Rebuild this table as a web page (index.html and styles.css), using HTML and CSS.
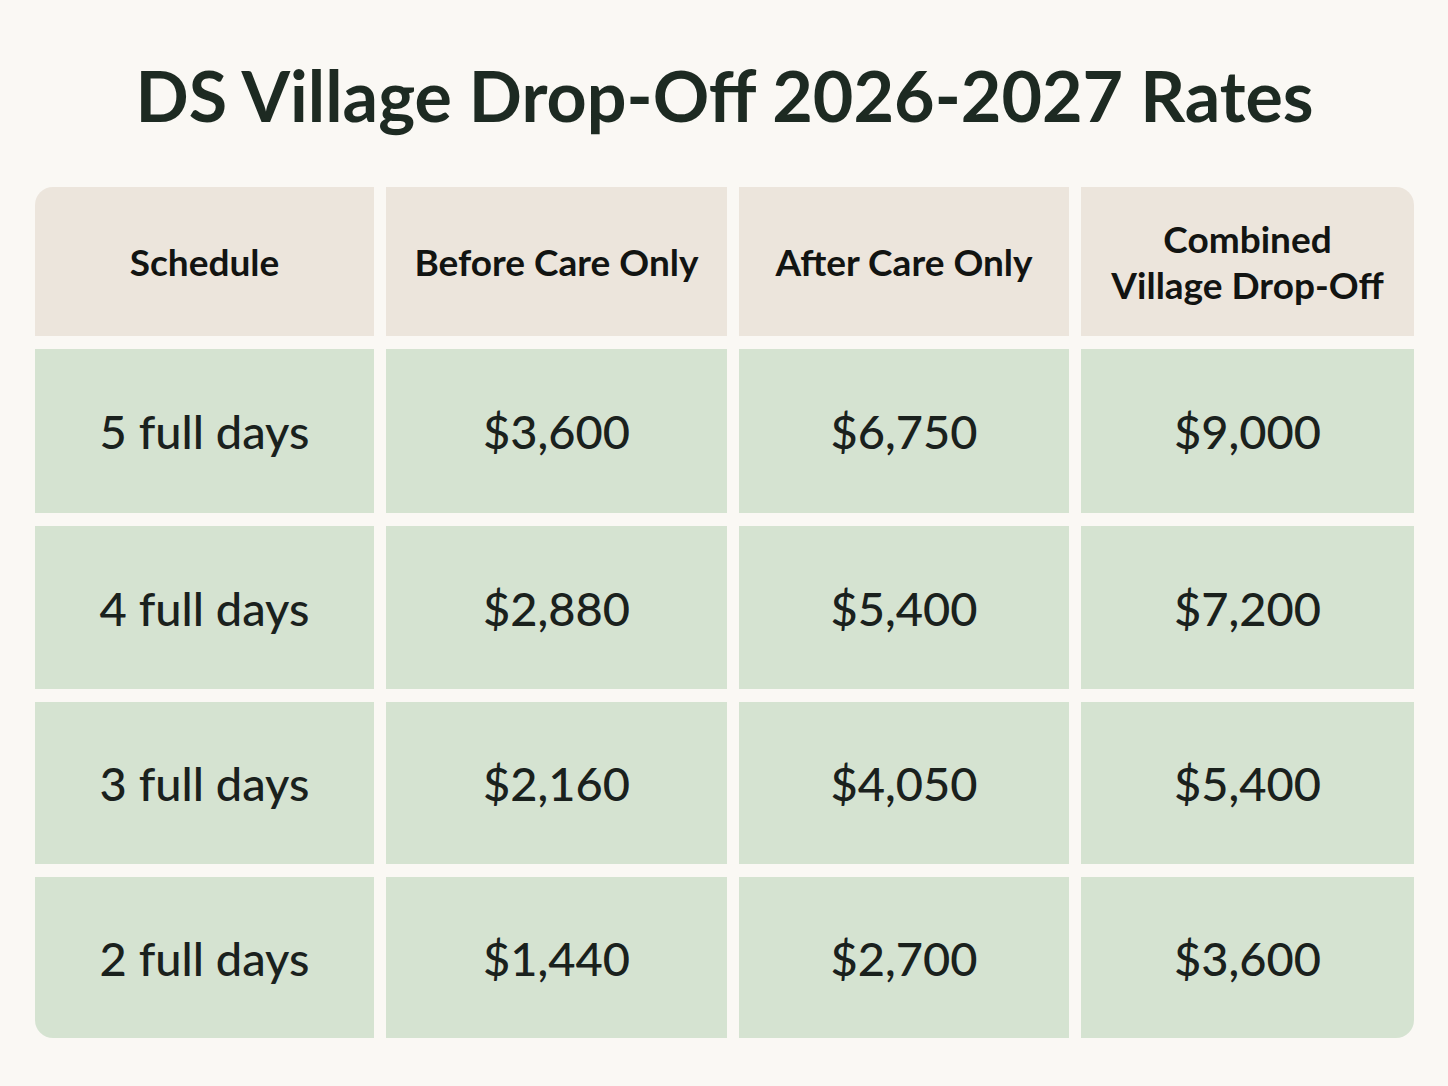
FILE: index.html
```html
<!DOCTYPE html>
<html lang="en">
<head>
<meta charset="utf-8">
<title>DS Village Drop-Off 2026-2027 Rates</title>
<link rel="stylesheet" href="styles.css">
</head>
<body>
<main class="page">
  <h1 class="title">DS Village Drop-Off 2026-2027 Rates</h1>
  <div class="rates">
    <div class="cell head tl">Schedule</div>
    <div class="cell head">Before Care Only</div>
    <div class="cell head">After Care Only</div>
    <div class="cell head tr">Combined<br>Village Drop-Off</div>

    <div class="cell">5 full days</div>
    <div class="cell">$3,600</div>
    <div class="cell">$6,750</div>
    <div class="cell">$9,000</div>

    <div class="cell">4 full days</div>
    <div class="cell">$2,880</div>
    <div class="cell">$5,400</div>
    <div class="cell">$7,200</div>

    <div class="cell">3 full days</div>
    <div class="cell">$2,160</div>
    <div class="cell">$4,050</div>
    <div class="cell">$5,400</div>

    <div class="cell bl">2 full days</div>
    <div class="cell">$1,440</div>
    <div class="cell">$2,700</div>
    <div class="cell br">$3,600</div>
  </div>
</main>
</body>
</html>
```
FILE: styles.css
```css
html, body {
  margin: 0;
  padding: 0;
  background: #faf8f4;
}
body {
  font-family: Lato, "Noto Sans", sans-serif;
  color: #1c231f;
}
.page {
  width: 1448px;
  height: 1086px;
  box-sizing: border-box;
  padding: 50px 34px 0 35px;
}
.title {
  margin: 0;
  height: 90px;
  text-align: center;
  font-size: 70px;
  line-height: 90px;
  font-weight: 700;
  color: #1d2a22;
}
.rates {
  margin-top: 47px;
  display: grid;
  grid-template-columns: 339px 341px 330px 333px;
  grid-template-rows: 149px 164px 163px 162px 161px;
  column-gap: 12px;
  row-gap: 13px;
}
.cell {
  display: flex;
  align-items: center;
  justify-content: center;
  text-align: center;
  background: #d5e3d1;
  font-size: 47px;
  font-weight: 500;
  color: #1a211d;
}
.head {
  background: #ece5dc;
  font-size: 37px;
  font-weight: 700;
  line-height: 46px;
  color: #121412;
}
.tl { border-top-left-radius: 18px; }
.tr { border-top-right-radius: 18px; }
.bl { border-bottom-left-radius: 18px; }
.br { border-bottom-right-radius: 18px; }
```
